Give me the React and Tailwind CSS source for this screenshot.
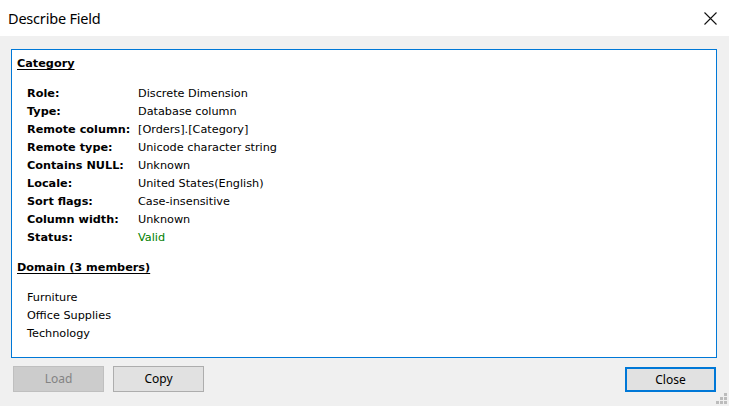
import React from "react";

const rows = [
  ["Role:", "Discrete Dimension"],
  ["Type:", "Database column"],
  ["Remote column:", "[Orders].[Category]"],
  ["Remote type:", "Unicode character string"],
  ["Contains NULL:", "Unknown"],
  ["Locale:", "United States(English)"],
  ["Sort flags:", "Case-insensitive"],
  ["Column width:", "Unknown"],
  ["Status:", "Valid"],
];

function Grip() {
  const dots = [
    [8, 0],
    [4, 4], [8, 4],
    [0, 8], [4, 8], [8, 8],
  ];
  return (
    <svg width="11" height="11" viewBox="0 0 11 11" className="absolute right-[2px] bottom-[2px]">
      {dots.map(([x, y], i) => (
        <rect key={i} x={x} y={y} width="3" height="3" fill="#bcbcbc" />
      ))}
    </svg>
  );
}

export default function App() {
  return (
    <div className="relative w-[729px] h-[406px] bg-[#f0f0f0] flex flex-col overflow-hidden">
      <div className="h-[36px] bg-white flex items-center justify-between pl-[8px] pr-[12px] shrink-0">
        <span className="text-[14.5px] text-black font-['Noto_Sans',sans-serif] leading-none tracking-[-0.2px]">Describe Field</span>
        <svg width="13" height="13" viewBox="0 0 13 13">
          <path d="M0.5 0.5 L12.5 12.5 M12.5 0.5 L0.5 12.5" stroke="#111" strokeWidth="1.1" />
        </svg>
      </div>
      <div className="pt-[13px] pl-[11px] pr-[12px]">
        <div className="h-[309px] bg-white border border-[#0078d7] pt-[5px] pl-[5px] font-['DejaVu_Sans',sans-serif] text-[11.25px] text-black">
          <div className="h-[18px] leading-[18px] font-bold underline underline-offset-2">Category</div>
          <div className="mt-[12px] pl-[10px] flex flex-col">
            {rows.map(([k, v]) => (
              <div key={k} className="flex h-[18px] leading-[18px]">
                <span className="w-[111px] shrink-0 font-bold">{k}</span>
                <span className={k === "Status:" ? "text-[#008000]" : ""}>{v}</span>
              </div>
            ))}
          </div>
          <div className="mt-[12px] h-[18px] leading-[18px] font-bold underline underline-offset-2">Domain (3 members)</div>
          <div className="mt-[12px] pl-[10px] flex flex-col">
            {["Furniture", "Office Supplies", "Technology"].map((t) => (
              <div key={t} className="h-[18px] leading-[18px]">{t}</div>
            ))}
          </div>
        </div>
      </div>
      <div className="mt-[8px] px-[13px] flex items-start font-['Noto_Sans',sans-serif] text-[12px]">
        <div className="w-[91px] h-[26px] bg-[#cccccc] border border-[#bfbfbf] flex items-center justify-center text-[#838383]">Load</div>
        <div className="ml-[9px] w-[91px] h-[26px] bg-[#e1e1e1] border border-[#adadad] flex items-center justify-center text-black">Copy</div>
        <div className="ml-auto mr-[0px] mt-[1px] w-[91px] h-[25px] bg-[#e1e1e1] border-2 border-[#0078d7] flex items-center justify-center text-black">Close</div>
      </div>
      <Grip />
    </div>
  );
}
